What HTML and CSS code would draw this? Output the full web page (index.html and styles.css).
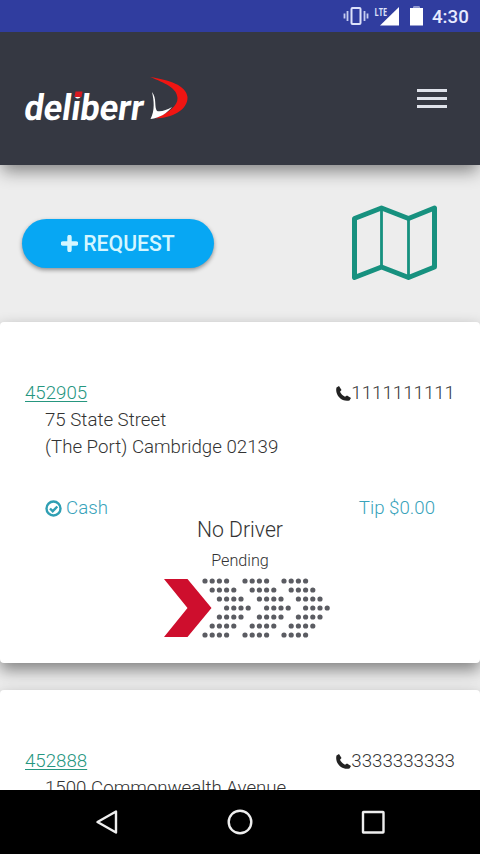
FILE: index.html
```html
<!DOCTYPE html>
<html>
<head>
    <meta charset="utf-8" />
    <title>deliberr</title>
    <link rel="stylesheet" href="styles.css">
</head>
<body>
    <div class="status">
        <svg class="status-icons" width="84" height="32" viewBox="0 0 84 32">
            <rect x="8.5" y="8" width="9" height="16" rx="1" fill="none" stroke="#dde2fa" stroke-width="2"/>
            <path d="M4.500 11v10M1.500 13.500v5M21.500 11v10M24.500 13.500v5" stroke="#c5ccf0" stroke-width="1.800"/>
            <path d="M56 7v18.500H37z" fill="#fff"/>
            <text class="lte" x="31.5" y="15.500" textLength="12.500" lengthAdjust="spacingAndGlyphs">LTE</text>
            <path d="M67 8h3.500V6.500h6V8H80v17.500H67z" fill="#fff"/>
            <path d="M70.500 6.500h6V8h-6z" fill="#8d96d0"/>
        </svg>
        <span class="time">4:30</span>
    </div>

    <div class="header">
        <svg class="logo" width="170" height="70" viewBox="0 0 170 70">
            <g transform="translate(2 47) skewX(-8)">
                <text class="logo-text" x="0" y="0" textLength="119" lengthAdjust="spacingAndGlyphs">deliberr</text>
            </g>
            <path class="logo-dot" d="M54.500 18.500h7l-1 5.500h-7z"/>
            <path d="M129 4C148 7 165 12 166.500 24C167 37 151 45 134 45.500C147 40 157 33 156.500 25C156 15 144 10 129 4z" fill="#f01512"/>
            <path d="M131 19C136 25 133 34 136 38C140 39 146 37 151 34C146 40 139 45 129.500 46C134 38 133 27 131 19z" fill="#fff"/>
        </svg>
        <div class="menu">
            <span></span>
            <span></span>
            <span></span>
        </div>
    </div>

    <div class="actions">
        <a class="request">
            <svg width="17" height="17" viewBox="0 0 17 17"><path d="M8.500 2v13M2 8.500h13" stroke="#d4f6ff" stroke-width="4.400" stroke-linecap="round"/></svg>
            <span>REQUEST</span>
        </a>
        <svg class="map" width="88" height="76" viewBox="0 0 88 76">
            <path d="M3.500 13.500L30.500 3L57.500 13.500L83.500 3V62L57.500 72.500L30.500 62L3.500 72.500z" fill="none" stroke="#17917f" stroke-width="5" stroke-linejoin="round"/>
            <path d="M30.500 3v59M57.500 13v59" stroke="#17917f" stroke-width="2.800"/>
        </svg>
    </div>

    <div class="card">
        <div class="row">
            <a class="order" href="#">452905</a>
            <span class="phone"><svg width="15" height="15" viewBox="0 0 15 15"><path d="M0.500 1.500L3 0L5.500 4L4 5.800C5 8 6.800 9.800 9 10.800L11 9.500L15 12L13.500 14.500C6 16.500-1.500 9 0.500 1.500z"/></svg>1111111111</span>
        </div>
        <div class="address">75 State Street<br>(The Port) Cambridge 02139</div>
        <div class="payment">
            <span class="cash"><svg width="17" height="17" viewBox="0 0 17 17"><circle cx="8.500" cy="8.500" r="7"/><path d="M5 8.500l2.700 2.700L12.300 6.500"/></svg>Cash</span>
            <span>Tip $0.00</span>
        </div>
        <div class="driver">No Driver</div>
        <div class="state">Pending</div>
        <svg class="progress" width="168" height="60" viewBox="0 0 168 60">
            <path d="M1 1h23.500L48.500 30L24.500 59H1L24.500 30z" fill="#ce0e2d"/>
            <g class="dots">
                <path id="arrow" d="M42 3h22M49.200 12h22M56.400 21h22M63.600 30h22M56.400 39h22M49.200 48h22M42 57h22"/>
                <use href="#arrow" x="40"/>
                <use href="#arrow" x="79"/>
            </g>
        </svg>
    </div>

    <div class="card last">
        <div class="row">
            <a class="order" href="#">452888</a>
            <span class="phone"><svg width="15" height="15" viewBox="0 0 15 15"><path d="M0.500 1.500L3 0L5.500 4L4 5.800C5 8 6.800 9.800 9 10.800L11 9.500L15 12L13.500 14.500C6 16.500-1.500 9 0.500 1.500z"/></svg>3333333333</span>
        </div>
        <div class="address">1500 Commonwealth Avenue</div>
    </div>

    <div class="navbar">
        <svg width="26" height="28" viewBox="0 0 26 28"><path d="M22 3.500v21L3.500 14z"/></svg>
        <svg width="26" height="28" viewBox="0 0 26 28"><circle cx="13" cy="14" r="11.300"/></svg>
        <svg width="26" height="28" viewBox="0 0 26 28"><rect x="3" y="4" width="20.500" height="20.500" rx="0.500"/></svg>
    </div>
</body>
</html>
```
FILE: styles.css
```css
* {
    margin: 0;
    padding: 0;
    box-sizing: border-box;
}

body {
    height: 854px;
    overflow: hidden;
    background-color: #ededed;
    font-family: Roboto, sans-serif;
    font-weight: 300;
    font-size: 18.7px;
    line-height: 27px;
    color: #333;
}

svg {
    display: block;
}

.status {
    position: relative;
    z-index: 1;
    display: flex;
    justify-content: flex-end;
    height: 32px;
    padding-right: 11px;
    background-color: #303d9f;
}

.time {
    width: 37px;
    margin-left: 5px;
    font-size: 18.7px;
    font-weight: 500;
    line-height: 34px;
    color: #e8ebff;
}

.lte {
    font: bold 11px "Open Sans", sans-serif;
    fill: #dde2fa;
}

.header {
    display: flex;
    justify-content: space-between;
    height: 133px;
    padding: 41px 33px 0 21px;
    background-color: #353842;
    box-shadow: 0 8px 16px -2px rgba(0, 0, 0, .45);
}

.logo-text {
    font: bold 36px Roboto, sans-serif;
    fill: #fff;
}

.logo-dot {
    fill: #d81920;
}

.menu {
    display: flex;
    flex-direction: column;
    gap: 5px;
    width: 30px;
    margin-top: 16px;
}

.menu span {
    height: 3px;
    background-color: #dfe2ea;
}

.actions {
    display: flex;
    justify-content: space-between;
    height: 157px;
    padding: 40px 41px 0 22px;
}

.request {
    display: flex;
    align-items: center;
    justify-content: center;
    gap: 5px;
    width: 192px;
    height: 49px;
    margin-top: 14px;
    border-radius: 25px;
    background-color: #07a7f3;
    box-shadow: 0 2px 4px rgba(0, 0, 0, .4);
    font-size: 21.2px;
    font-weight: 500;
    color: #d4f6ff;
}

.card {
    height: 341px;
    margin-bottom: 27px;
    padding: 58px 25px 0;
    border-radius: 4px;
    background-color: #fff;
    box-shadow: 0 7px 16px rgba(0, 0, 0, .45);
}

.last {
    height: 120px;
    margin-bottom: 0;
}

.row,
.payment {
    display: flex;
    justify-content: space-between;
}

.order {
    color: #26967f;
    text-underline-offset: 2px;
}

.phone,
.cash {
    display: flex;
    align-items: center;
}

.phone svg {
    fill: #222;
}

.address {
    padding-left: 20px;
}

.payment {
    margin-top: 34px;
    padding: 0 20px;
    color: #39a3bb;
}

.cash svg {
    margin-right: 4px;
    fill: none;
    stroke: #2f9fb3;
    stroke-width: 2.4;
}

.driver,
.state {
    text-align: center;
}

.driver {
    margin-top: -6px;
    font-size: 21.2px;
}

.state {
    margin-top: 4px;
    font-size: 16.2px;
}

.progress {
    margin: 4px auto 0 138px;
}

.dots {
    fill: none;
    stroke: #5b5c62;
    stroke-width: 5.2;
    stroke-linecap: round;
    stroke-dasharray: 0 7.2;
}

.navbar {
    position: fixed;
    left: 0;
    right: 0;
    bottom: 0;
    display: flex;
    justify-content: space-between;
    height: 64px;
    padding: 18px 94px;
    background-color: #000;
}

.navbar svg {
    fill: none;
    stroke: #eee;
    stroke-width: 2.4;
    stroke-linejoin: round;
}
```
